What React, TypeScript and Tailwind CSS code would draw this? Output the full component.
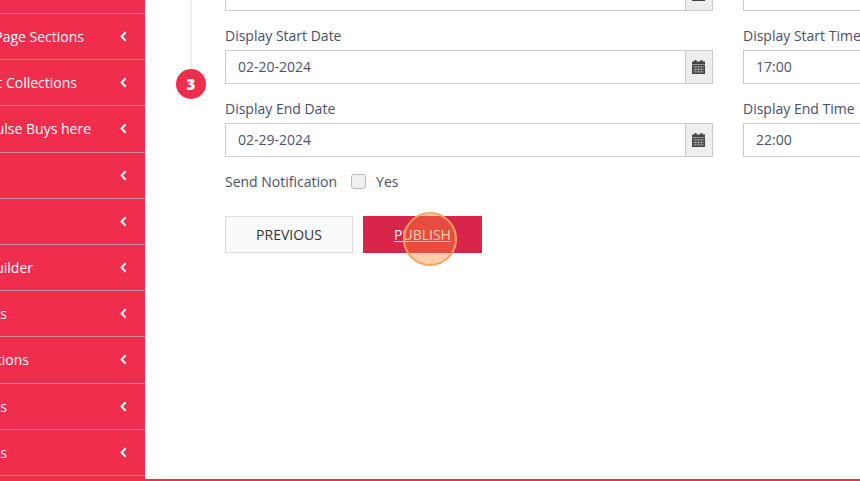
const rows = [
  { w: "w-0", t: "" },
  { w: "w-[84px]", t: "Page Sections" },
  { w: "w-[77px]", t: "t Collections" },
  { w: "w-[91px]", t: "ulse Buys here" },
  { w: "w-0", t: "" },
  { w: "w-0", t: "" },
  { w: "w-[33px]", t: "uilder" },
  { w: "w-[7px]", t: "s" },
  { w: "w-[29px]", t: "tions" },
  { w: "w-[7px]", t: "s" },
  { w: "w-[7px]", t: "s" },
  { w: "w-0", t: "" },
];

function Chevron() {
  return (
    <svg width="7" height="11" viewBox="0 0 7 11" className="mr-[18px]">
      <polyline points="5.6,1.2 1.6,5.5 5.6,9.8" fill="none" stroke="#fff" strokeWidth="2" />
    </svg>
  );
}

function CalendarIcon() {
  return (
    <svg width="13" height="14" viewBox="0 0 13 14" fill="#444">
      <rect x="0" y="1.5" width="13" height="3" />
      <rect x="2.5" y="0" width="2" height="3" />
      <rect x="8.5" y="0" width="2" height="3" />
      <rect x="0" y="5" width="13" height="9" />
      <g fill="#aaa">
        <rect x="1" y="6.5" width="11" height="0.7" />
        <rect x="1" y="9" width="11" height="0.7" />
        <rect x="1" y="11.5" width="11" height="0.7" />
        <rect x="3.5" y="6" width="0.7" height="7" />
        <rect x="6.2" y="6" width="0.7" height="7" />
        <rect x="8.9" y="6" width="0.7" height="7" />
      </g>
    </svg>
  );
}

function Field({ label, value, calendar }: { label: string; value: string; calendar?: boolean }) {
  return (
    <div className="w-[488px] shrink-0">
      <div className="h-[27px] text-[14px] leading-[19px] pt-[3px] text-[#4a4f68]">{label}</div>
      <div className="flex h-[34px] border border-[#ccc] bg-white">
        <div className="flex-1 pl-3 text-[14px] leading-[32px] text-[#4d5272]">{value}</div>
        {calendar && (
          <div className="w-[27px] pr-[2px] flex items-center justify-center bg-[#eee] border-l border-[#ccc]">
            <CalendarIcon />
          </div>
        )}
      </div>
    </div>
  );
}

export default function App() {
  return (
    <div className="h-[481px] w-[860px] overflow-hidden flex flex-col bg-white font-['Open_Sans',sans-serif]">
      <div className="h-[479px] flex min-h-0">
        <aside className="w-[145px] shrink-0 bg-[#ef2d4c] overflow-hidden">
          <div className="-mt-[32.2px]">
            {rows.map((r, i) => (
              <div key={i} className="h-[46.2px] border-b border-[#c58ca6] flex items-center justify-between text-white text-[14px]">
                <div className={`${r.w} overflow-hidden whitespace-nowrap flex justify-end`}>{r.t}</div>
                <Chevron />
              </div>
            ))}
          </div>
        </aside>
        <main className="flex-1 min-w-0 overflow-hidden flex">
          <div className="w-[80px] shrink-0 flex flex-col items-center pl-[12px]">
            <div className="w-[2px] h-[69px] bg-[#eeeeee]" />
            <div className="w-[30px] h-[30px] rounded-full bg-[#ef2d4c] text-white font-extrabold text-[15px] pt-[1px] flex items-center justify-center">3</div>
          </div>
          <div className="flex-1 min-w-0 -mt-[50px]">
            <div className="flex gap-[30px]">
              <Field label="" value="" calendar />
              <Field label="" value="" />
            </div>
            <div className="flex gap-[30px] mt-[12px]">
              <Field label="Display Start Date" value="02-20-2024" calendar />
              <Field label="Display Start Time" value="17:00" />
            </div>
            <div className="flex gap-[30px] mt-[12px]">
              <Field label="Display End Date" value="02-29-2024" calendar />
              <Field label="Display End Time" value="22:00" />
            </div>
            <div className="flex items-center h-[20px] mt-[14px] text-[14px] text-[#4a4f68]">
              <span>Send Notification</span>
              <span className="w-[15px] h-[15px] ml-[14px] mr-[10px] rounded-[3px] border border-[#bbb] bg-[#f0f0f0]" />
              <span>Yes</span>
            </div>
            <div className="flex gap-[10px] mt-[25px]">
              <div className="w-[128px] h-[37px] border border-[#ddd] bg-[#fafafa] text-[#333] text-[14px] flex items-center justify-center">PREVIOUS</div>
              <div className="relative w-[119px] h-[37px] bg-[#d9254a] text-white text-[14px] underline flex items-center justify-center">
                PUBLISH
                <span className="absolute left-[40px] top-[-4px] w-[54px] h-[54px] rounded-full border-2 border-[#f9a55f] bg-[#fa8732]/40" />
              </div>
            </div>
          </div>
        </main>
      </div>
      <div className="h-[2px] bg-[#ef2d4c]" />
    </div>
  );
}
